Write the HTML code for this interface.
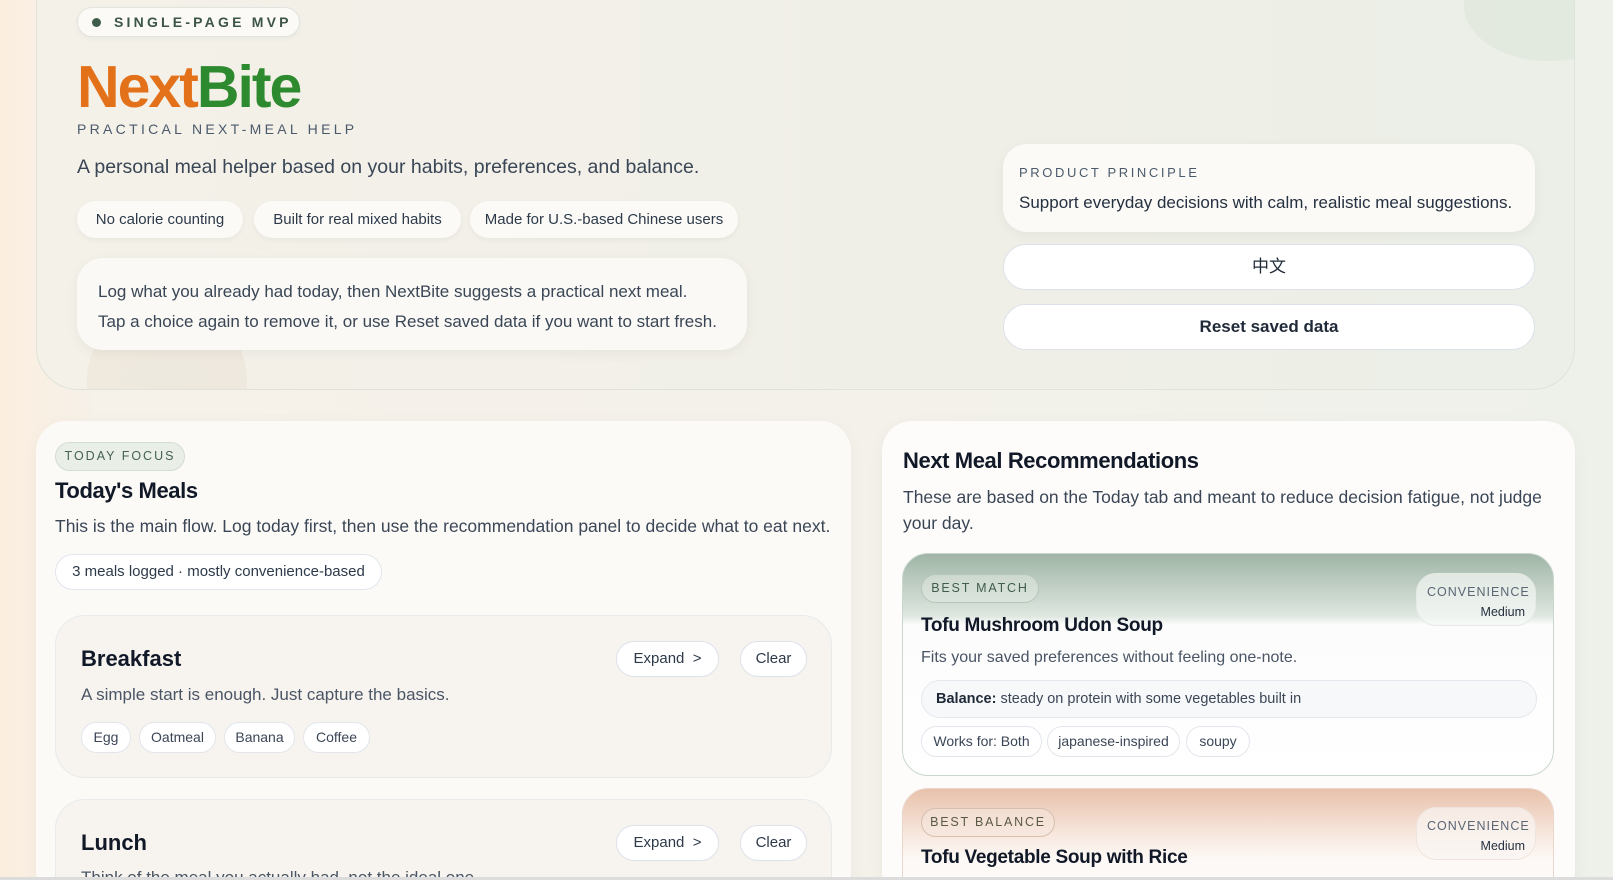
<!DOCTYPE html>
<html><head><meta charset="utf-8"><style>
*{box-sizing:border-box;margin:0;padding:0}
html{height:880px;overflow:hidden}
body{width:1613px;height:880px;overflow:hidden;font-family:"Liberation Sans","Noto Sans CJK SC",sans-serif;color:#1f2937;
background:linear-gradient(90deg,#fbeedf 0%,#f6f1e9 6%,#f4f1ea 50%,#eef1ea 100%);position:relative}
.abs{position:absolute}
.hero{left:36px;top:-40px;width:1539px;height:430px;border-radius:42px;border:1px solid #dfe3da;
background:linear-gradient(90deg,#f4f1e9,#f0efe7 60%,#ebefe7);overflow:hidden}
.pill{border-radius:999px;background:#fbfaf6;border:1px solid #e2e4df;box-shadow:0 2px 6px rgba(0,0,0,.04)}
.chip{position:absolute;top:201px;height:37px;border-radius:999px;background:#fbfaf6;box-shadow:0 2px 6px rgba(0,0,0,.05);font-size:15px;color:#2d3a4a;line-height:37px;text-align:center}
.panel{background:#fcfaf7;border-radius:30px;box-shadow:0 4px 18px rgba(0,0,0,.04)}
.btn{position:absolute;height:36px;border-radius:999px;background:#fff;border:1px solid #dde2ea;font-size:15px;line-height:34px;text-align:center;color:#2d3a4a}
.fchip{position:absolute;height:31px;border-radius:999px;background:#fff;border:1px solid #e2e6ec;font-size:14px;line-height:29px;text-align:center;color:#3b4656}
.clip{position:absolute;left:0;top:0;width:1613px;height:877px;overflow:hidden}
</style></head><body>
<div class="clip">
<div class="abs hero">
 <div class="abs" style="right:-60px;top:-10px;width:170px;height:110px;border-radius:50%;background:rgba(205,218,205,.3)"></div>
 <div class="abs" style="left:50px;top:340px;width:160px;height:160px;border-radius:50%;background:rgba(230,215,200,.3)"></div>
</div>
<div class="abs pill" style="left:77px;top:7px;width:223px;height:30px;font-size:14px;letter-spacing:3.2px;color:#3d5547;line-height:29px;padding-left:36px;font-weight:bold">SINGLE-PAGE MVP</div>
<div class="abs" style="left:92px;top:18px;width:9px;height:9px;border-radius:50%;background:#3f5d4a"></div>
<div class="abs" style="left:77px;top:53px;font-size:59px;font-weight:bold;letter-spacing:-2px"><span style="color:#e3711a">Next</span><span style="color:#2e8a2e">Bite</span></div>
<div class="abs" style="left:77px;top:121px;font-size:14px;letter-spacing:3.3px;color:#4b5a6b">PRACTICAL NEXT-MEAL HELP</div>
<div class="abs" style="left:77px;top:156px;font-size:19.5px;color:#3a4656">A personal meal helper based on your habits, preferences, and balance.</div>
<div class="chip" style="left:77px;width:166px">No calorie counting</div>
<div class="chip" style="left:254px;width:207px">Built for real mixed habits</div>
<div class="chip" style="left:470px;width:268px">Made for U.S.-based Chinese users</div>
<div class="abs" style="left:77px;top:258px;width:670px;height:92px;border-radius:26px;background:#faf9f5;box-shadow:0 3px 12px rgba(0,0,0,.05);font-size:17px;color:#3a4656;padding:19px 0 0 21px;line-height:30px">Log what you already had today, then NextBite suggests a practical next meal.<br>Tap a choice again to remove it, or use Reset saved data if you want to start fresh.</div>
<div class="abs" style="left:1003px;top:144px;width:532px;height:88px;border-radius:24px;background:#fbfaf6;box-shadow:0 3px 12px rgba(0,0,0,.05);padding:21px 16px">
 <div style="font-size:13px;letter-spacing:2.6px;color:#4b5a6b">PRODUCT PRINCIPLE</div>
 <div style="font-size:17px;color:#253040;margin-top:13px;white-space:nowrap">Support everyday decisions with calm, realistic meal suggestions.</div></div>
<div class="abs" style="left:1003px;top:244px;width:532px;height:46px;border-radius:999px;background:#fff;border:1px solid #dde2ea;text-align:center;line-height:44px;font-size:17px">中文</div>
<div class="abs" style="left:1003px;top:304px;width:532px;height:46px;border-radius:999px;background:#fff;border:1px solid #dde2ea;text-align:center;line-height:44px;font-size:17px;font-weight:bold;color:#1f2937">Reset saved data</div>

<div class="abs panel" style="left:36px;top:421px;width:815px;height:480px"></div>
<div class="abs" style="left:55px;top:442px;width:130px;height:29px;border-radius:999px;background:#e9efe7;border:1px solid #d3ddd2;font-size:12.5px;letter-spacing:2px;color:#46604f;line-height:27px;text-align:center">TODAY FOCUS</div>
<div class="abs" style="left:55px;top:478px;font-size:22px;font-weight:bold;color:#111827;letter-spacing:-.4px">Today's Meals</div>
<div class="abs" style="left:55px;top:516px;font-size:17.5px;color:#3a4656">This is the main flow. Log today first, then use the recommendation panel to decide what to eat next.</div>
<div class="abs" style="left:55px;top:554px;width:327px;height:36px;border-radius:999px;background:#fff;border:1px solid #e2e6ec;font-size:15px;line-height:34px;text-align:center;color:#2d3a4a">3 meals logged · mostly convenience-based</div>
<div class="abs" style="left:55px;top:615px;width:777px;height:163px;border-radius:30px;background:#f7f4ef;border:1px solid #e8eaec"></div>
<div class="abs" style="left:81px;top:646px;font-size:22px;font-weight:bold;color:#111827">Breakfast</div>
<div class="btn" style="left:616px;top:641px;width:103px">Expand &nbsp;&gt;</div>
<div class="btn" style="left:740px;top:641px;width:67px">Clear</div>
<div class="abs" style="left:81px;top:685px;font-size:17px;color:#4a5565">A simple start is enough. Just capture the basics.</div>
<div class="fchip" style="left:81px;top:722px;width:50px">Egg</div>
<div class="fchip" style="left:139px;top:722px;width:77px">Oatmeal</div>
<div class="fchip" style="left:224px;top:722px;width:71px">Banana</div>
<div class="fchip" style="left:303px;top:722px;width:67px">Coffee</div>
<div class="abs" style="left:55px;top:799px;width:777px;height:120px;border-radius:30px;background:#f7f4ef;border:1px solid #e8eaec"></div>
<div class="abs" style="left:81px;top:830px;font-size:22px;font-weight:bold;color:#111827">Lunch</div>
<div class="btn" style="left:616px;top:825px;width:103px">Expand &nbsp;&gt;</div>
<div class="btn" style="left:740px;top:825px;width:67px">Clear</div>
<div class="abs" style="left:81px;top:868px;font-size:17px;color:#4a5565">Think of the meal you actually had, not the ideal one.</div>

<div class="abs panel" style="left:882px;top:421px;width:693px;height:480px;background:#fdfcfa"></div>
<div class="abs" style="left:903px;top:448px;font-size:22px;font-weight:bold;color:#111827;letter-spacing:-.4px">Next Meal Recommendations</div>
<div class="abs" style="left:903px;top:484px;width:650px;font-size:17.5px;color:#3a4656;line-height:26px">These are based on the Today tab and meant to reduce decision fatigue, not judge your day.</div>

<div class="abs" style="left:902px;top:553px;width:652px;height:223px;border-radius:26px;border:1px solid #c9d6cc;background:linear-gradient(180deg,#9fb5a6 0%,#dfe7e0 28%,#fbfcfb 32%,#fff 100%);overflow:hidden"></div>
<div class="abs" style="left:921px;top:574px;width:118px;height:29px;border-radius:999px;border:1px solid #b7c6ba;background:rgba(230,236,230,.5);font-size:12.5px;letter-spacing:1.8px;color:#3f5d4a;line-height:27px;text-align:center">BEST MATCH</div>
<div class="abs" style="left:1416px;top:573px;width:120px;height:53px;border-radius:20px;background:rgba(245,248,245,.7);border:1px solid #e5eae5;text-align:right;padding:8px 10px;font-size:12.5px;letter-spacing:1px;color:#5b6675;line-height:20px">CONVENIENCE<br><span style="letter-spacing:0;color:#253040;font-size:12.5px">Medium</span></div>
<div class="abs" style="left:921px;top:615px;font-size:19px;font-weight:bold;color:#111827;letter-spacing:-.3px">Tofu Mushroom Udon Soup</div>
<div class="abs" style="left:921px;top:649px;font-size:16px;color:#4a5565">Fits your saved preferences without feeling one-note.</div>
<div class="abs" style="left:921px;top:680px;width:616px;height:38px;border-radius:999px;background:#f7f8fa;border:1px solid #e4e8ee;font-size:14.5px;line-height:36px;padding-left:14px;color:#3b4656"><b style="color:#1f2937">Balance:</b> steady on protein with some vegetables built in</div>
<div class="fchip" style="left:921px;top:726px;width:121px">Works for: Both</div>
<div class="fchip" style="left:1047px;top:726px;width:133px">japanese-inspired</div>
<div class="fchip" style="left:1186px;top:726px;width:64px">soupy</div>

<div class="abs" style="left:902px;top:788px;width:652px;height:120px;border-radius:26px;border:1px solid #ead6cb;background:linear-gradient(180deg,#e8c1aa 0%,#f6e4da 35%,#fdf9f6 60%)"></div>
<div class="abs" style="left:921px;top:808px;width:134px;height:29px;border-radius:999px;border:1px solid #d9bfae;background:rgba(245,232,224,.5);font-size:12.5px;letter-spacing:1.8px;color:#5a5a44;line-height:27px;text-align:center">BEST BALANCE</div>
<div class="abs" style="left:1416px;top:807px;width:120px;height:53px;border-radius:20px;background:rgba(250,245,242,.7);border:1px solid #efe4dd;text-align:right;padding:8px 10px;font-size:12.5px;letter-spacing:1px;color:#5b6675;line-height:20px">CONVENIENCE<br><span style="letter-spacing:0;color:#253040">Medium</span></div>
<div class="abs" style="left:921px;top:847px;font-size:19px;font-weight:bold;color:#111827;letter-spacing:-.3px">Tofu Vegetable Soup with Rice</div>
</div>
<div class="abs" style="left:0;top:877px;width:1613px;height:3px;background:#dcdcdc"></div>
</body></html>
